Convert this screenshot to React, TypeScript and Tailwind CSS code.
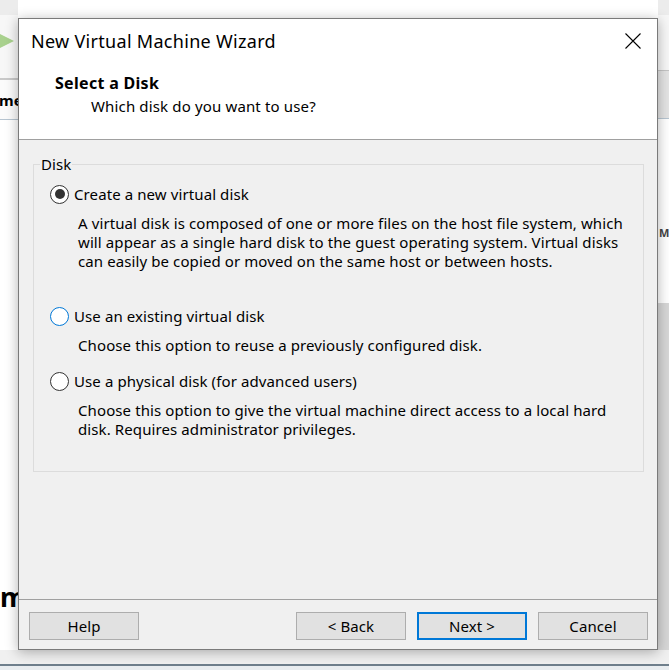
import { useState } from 'react';

const ui = { fontFamily: '"Noto Sans", "Open Sans", sans-serif' };

type Option = {
  id: 'new' | 'existing' | 'physical';
  label: string;
  lines: string[];
  gap: string;
};

const options: Option[] = [
  {
    id: 'new',
    label: 'Create a new virtual disk',
    lines: [
      'A virtual disk is composed of one or more files on the host file system, which',
      'will appear as a single hard disk to the guest operating system. Virtual disks',
      'can easily be copied or moved on the same host or between hosts.',
    ],
    gap: 'mt-0',
  },
  {
    id: 'existing',
    label: 'Use an existing virtual disk',
    lines: ['Choose this option to reuse a previously configured disk.'],
    gap: 'mt-[35px]',
  },
  {
    id: 'physical',
    label: 'Use a physical disk (for advanced users)',
    lines: [
      'Choose this option to give the virtual machine direct access to a local hard',
      'disk. Requires administrator privileges.',
    ],
    gap: 'mt-[16px]',
  },
];

function Radio({ checked, hot }: { checked: boolean; hot?: boolean }) {
  return (
    <span
      className={`flex h-[19px] w-[19px] shrink-0 items-center justify-center rounded-full border bg-white ${
        hot ? 'border-[#0078d7]' : 'border-[#333333]'
      }`}
    >
      {checked && <span className="h-[10px] w-[10px] rounded-full bg-[#333333]" />}
    </span>
  );
}

function WizardButton({ label, primary }: { label: string; primary?: boolean }) {
  return (
    <button
      type="button"
      className={`h-[28px] w-[110px] bg-[#e1e1e1] text-[15px] tracking-[0.1px] text-black ${
        primary ? 'border-2 border-[#0078d7]' : 'border border-[#adadad]'
      }`}
    >
      {label}
    </button>
  );
}

export default function App() {
  const [choice, setChoice] = useState<Option['id']>('new');

  return (
    <div className="relative h-[670px] w-[669px] overflow-hidden bg-white" style={ui}>
      {/* host window behind the wizard */}
      <div className="flex h-[650px]">
        <div className="flex w-[18px] flex-col">
          <div className="h-[15px] bg-[#ececec]" />
          <div className="relative h-[63px] bg-[#f7f7f7]">
            <svg className="absolute left-0 top-[16px]" width="18" height="20" viewBox="0 0 18 20">
              <polygon points="-6,0 14,10 -6,20" fill="#a9d18e" />
            </svg>
          </div>
          <div className="h-[2px] bg-[#c9c9c9]" />
          <div className="flex h-[39px] items-center bg-[#fbfbfb] pt-[2px] text-[15px] font-bold leading-none text-black">
            <span className="-ml-[1px] whitespace-nowrap">me</span>
          </div>
          <div className="h-px bg-[#b7c5d1]" />
          <div className="flex flex-1 flex-col justify-end bg-white pb-[40px]">
            <span className="whitespace-nowrap text-[27px] font-bold leading-none text-black">m</span>
          </div>
        </div>
        <div className="flex-1" />
        <div className="flex w-[11px] flex-col">
          <div className="h-[15px] bg-[#ececec]" />
          <div className="h-[55px] bg-[#f7f7f7]" />
          <div className="h-px bg-[#c4c4c4]" />
          <div className="h-[47px] bg-[#e4e4e4]" />
          <div className="h-px bg-[#b7c5d1]" />
          <div className="flex h-[184px] items-start bg-white pt-[108px] text-[11px] font-bold leading-none text-[#444]">
            <span className="ml-[1px]">M</span>
          </div>
          <div className="flex-1 bg-[#d7d7d7]" />
        </div>
      </div>
      <div className="h-[14px] bg-[#f0f0f0]" />
      <div className="h-[2px] bg-[#6f7f8c]" />
      <div className="h-[4px] bg-[#e9edf0]" />

      {/* wizard dialog */}
      <div className="absolute left-[18px] top-[18px] flex h-[632px] w-[640px] flex-col border border-[#7a7a7a] bg-[#f0f0f0] shadow-[0_2px_12px_rgba(0,0,0,0.3)]">
        <div className="bg-white">
          <div className="flex h-[44px] items-center justify-between pl-[12px] pr-[16px]">
            <span className="text-[18px] tracking-[0.3px] text-black">New Virtual Machine Wizard</span>
            <svg width="16" height="16" viewBox="0 0 16 16">
              <path d="M0.5 0.5 L15.5 15.5 M15.5 0.5 L0.5 15.5" stroke="#000" strokeWidth="1.1" />
            </svg>
          </div>
          <div className="h-[77px] border-b border-[#a0a0a0] pt-[10px]">
            <div className="pl-[36px] text-[16px] font-bold leading-[20px] tracking-[0.3px] text-black">
              Select a Disk
            </div>
            <div className="mt-[3px] pl-[72px] text-[15px] leading-[20px] tracking-[0.15px] text-black">
              Which disk do you want to use?
            </div>
          </div>
        </div>

        <div className="flex-1 pl-[14px] pt-[24px] tracking-[0.1px]">
          <div className="relative h-[308px] w-[611px] border border-[#dcdcdc] pt-[19px]">
            <span className="absolute -top-[11px] left-[6px] bg-[#f0f0f0] px-[1px] text-[15px] leading-[20px] text-black">
              Disk
            </span>
            {options.map((opt) => (
              <div key={opt.id} className={opt.gap}>
                <label
                  className="flex h-[20px] cursor-default items-center pl-[16px] text-[15px] text-black"
                  onClick={() => setChoice(opt.id)}
                >
                  <Radio checked={choice === opt.id} hot={opt.id === 'existing'} />
                  <span className="ml-[5px] whitespace-nowrap">{opt.label}</span>
                </label>
                <div className="mt-[10px] pl-[44px] text-[15px] leading-[19px] text-black">
                  {opt.lines.map((line) => (
                    <div key={line} className="whitespace-nowrap">
                      {line}
                    </div>
                  ))}
                </div>
              </div>
            ))}
          </div>
        </div>

        <div className="flex h-[50px] border-t border-[#a0a0a0] pl-[10px] pr-[9px] pt-[12px]">
          <WizardButton label="Help" />
          <div className="flex-1" />
          <div className="flex gap-[11px]">
            <WizardButton label="< Back" />
            <WizardButton label="Next >" primary />
            <WizardButton label="Cancel" />
          </div>
        </div>
      </div>
    </div>
  );
}
